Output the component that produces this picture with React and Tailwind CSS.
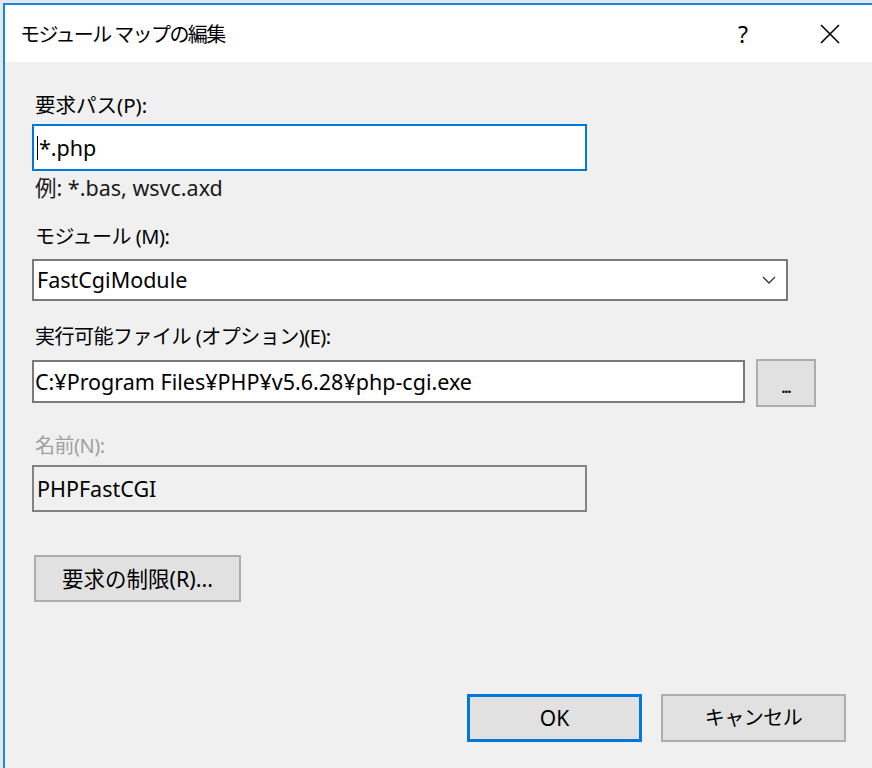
import React from "react";

const font = { fontFamily: '"Noto Sans", "Noto Sans CJK JP", sans-serif' };

export default function App() {
  return (
    <div
      className="w-[872px] h-[768px] overflow-hidden bg-[#e4e8ec] pt-[3px] pl-[3px]"
      style={font}
    >
      <div className="w-full h-full border-t-2 border-l-2 border-[#1a86dc] flex flex-col bg-[#f0f0f0]">
        {/* Title bar */}
        <div className="h-[57px] bg-white flex items-center shrink-0">
          <div className="pl-[15px] text-[20px] leading-[28px] text-black tracking-[-1.6px] mt-[3px]">
            モジュール マップの編集
          </div>
          <div className="ml-auto flex items-center pr-[19px]">
            <div className="w-[40px] text-center text-[23px] leading-[28px] text-black">?</div>
            <div className="w-[46px] ml-[44px] flex items-center justify-center">
              <svg width="20" height="20" viewBox="0 0 20 20">
                <path d="M1 1 L19 19 M19 1 L1 19" stroke="#000" strokeWidth="1.6" />
              </svg>
            </div>
          </div>
        </div>

        {/* Body */}
        <div className="flex flex-col pl-[27px] text-[20px] text-black">
          <div className="mt-[29px] pl-[3px] leading-[28px] text-[20.5px]">要求パス(P):</div>
          <div className="mt-[5px] w-[555px] h-[47px] bg-white border-2 border-[#0078d7] flex items-center pl-[3px]">
            <span className="w-[1px] h-[24px] bg-black mr-[1px]"></span>
            <span className="leading-[28px] text-[21.5px]">*.php</span>
          </div>
          <div className="mt-[3px] pl-[3px] leading-[28px] text-[21.5px] text-[#1a1a1a]">例: *.bas, wsvc.axd</div>

          <div className="mt-[21px] pl-[3px] leading-[28px] tracking-[-0.5px]">モジュール (M):</div>
          <div className="mt-[8px] w-[756px] h-[42px] bg-white border-2 border-[#7a7a7a] flex items-center pl-[3px] pr-[10px]">
            <span className="leading-[28px] text-[21.5px]">FastCgiModule</span>
            <svg className="ml-auto" width="14" height="8" viewBox="0 0 14 8">
              <path d="M1 1 L7 7 L13 1" fill="none" stroke="#333" strokeWidth="1.3" />
            </svg>
          </div>

          <div className="mt-[22px] pl-[3px] leading-[28px] tracking-[-0.5px]">実行可能ファイル (オプション)(E):</div>
          <div className="mt-[8px] flex items-start">
            <div className="mt-[1px] w-[713px] h-[43px] bg-white border-2 border-[#7a7a7a] flex items-center pl-[1px]">
              <span className="leading-[28px] text-[21.5px]">C:¥Program Files¥PHP¥v5.6.28¥php-cgi.exe</span>
            </div>
            <div className="ml-[11px] w-[60px] h-[48px] bg-[#e1e1e1] border-2 border-[#adadad] flex items-end justify-center pb-[10px]">
              <span className="text-[14px] leading-[14px] font-bold tracking-[-1px]">...</span>
            </div>
          </div>

          <div className="mt-[25px] pl-[3px] leading-[28px] text-[#a0a0a0] tracking-[-0.5px]">名前(N):</div>
          <div className="mt-[5px] w-[555px] h-[47px] bg-[#f0f0f0] border-2 border-[#838383] flex items-center pl-[3px]">
            <span className="leading-[28px] text-[21.5px]">PHPFastCGI</span>
          </div>

          <div className="mt-[43px] ml-[2px] w-[207px] h-[47px] bg-[#e1e1e1] border-2 border-[#adadad] flex items-center justify-center">
            <span className="leading-[28px] text-[21.5px]">要求の制限(R)...</span>
          </div>

          <div className="mt-[92px] flex justify-end pr-[26px]">
            <div className="w-[175px] h-[48px] bg-[#e1e1e1] border-[3px] border-[#0078d7] flex items-center justify-center">
              <span className="leading-[28px] text-[21px]">OK</span>
            </div>
            <div className="ml-[19px] w-[185px] h-[48px] bg-[#e1e1e1] border-2 border-[#adadad] flex items-center justify-center">
              <span className="leading-[28px] tracking-[-0.5px]">キャンセル</span>
            </div>
          </div>
        </div>
      </div>
    </div>
  );
}
